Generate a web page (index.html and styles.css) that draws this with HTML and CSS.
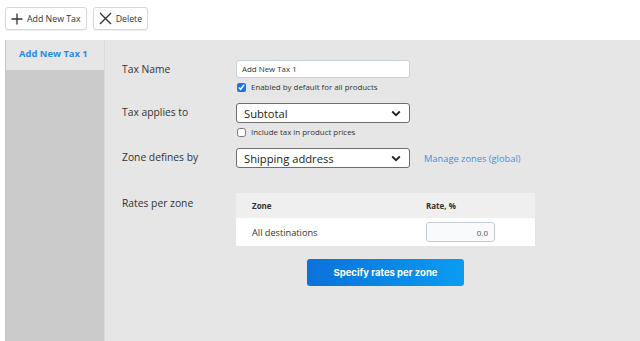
FILE: index.html
```html
<!DOCTYPE html>
<html lang="en">

<head>
    <meta charset="UTF-8">
    <title>Taxes</title>
    <link rel="stylesheet" href="styles.css">
</head>

<body>
    <div class="toolbar">
        <button class="tool-btn">
            <svg width="12" height="12" viewBox="0 0 12 12"><path d="M6 0.5V11.5M0.5 6H11.5" stroke="#333" stroke-width="1.3"/></svg>
            Add New Tax
        </button>
        <button class="tool-btn">
            <svg width="13" height="13" viewBox="0 0 13 13"><path d="M1 1L12 12M12 1L1 12" stroke="#333" stroke-width="1.4"/></svg>
            Delete
        </button>
    </div>

    <div class="panel">
        <div class="sidebar">
            <div class="tab">Add New Tax 1</div>
        </div>

        <div class="main">
            <div class="form-row row-name">
                <label class="row-label">Tax Name</label>
                <div class="field">
                    <input type="text" class="text-input" value="Add New Tax 1">
                    <label class="check"><input type="checkbox" checked> Enabled by default for all products</label>
                </div>
            </div>

            <div class="form-row row-applies">
                <label class="row-label">Tax applies to</label>
                <div class="field">
                    <div class="select">
                        <span>Subtotal</span>
                        <svg width="10" height="7" viewBox="0 0 10 7"><path d="M1.2 1.5L5 5.2L8.8 1.5" fill="none" stroke="#222" stroke-width="1.8"/></svg>
                    </div>
                    <label class="check"><input type="checkbox"> Include tax in product prices</label>
                </div>
            </div>

            <div class="form-row row-zone">
                <label class="row-label">Zone defines by</label>
                <div class="field inline">
                    <div class="select">
                        <span>Shipping address</span>
                        <svg width="10" height="7" viewBox="0 0 10 7"><path d="M1.2 1.5L5 5.2L8.8 1.5" fill="none" stroke="#222" stroke-width="1.8"/></svg>
                    </div>
                    <a href="#" class="link">Manage zones (global)</a>
                </div>
            </div>

            <div class="form-row row-rates">
                <label class="row-label">Rates per zone</label>
                <div class="field">
                    <div class="rates">
                        <div class="rates-head">
                            <span class="col-zone">Zone</span>
                            <span class="col-rate">Rate, %</span>
                        </div>
                        <div class="rates-row">
                            <span class="col-zone">All destinations</span>
                            <span class="col-rate"><input type="text" class="rate-input" value="0.0"></span>
                        </div>
                    </div>
                    <div class="rates-action">
                        <button class="primary-btn">Specify rates per zone</button>
                    </div>
                </div>
            </div>
        </div>
    </div>
</body>

</html>
```

FILE: styles.css
```css
body {
    margin: 0;
    padding: 0;
    background-color: #ffffff;
    font-family: "Open Sans", "Noto Sans", sans-serif;
    color: #333333;
    height: 341px;
    overflow: hidden;
}

.toolbar {
    display: flex;
    gap: 6px;
    padding: 7px 5px 0 5px;
    height: 33px;
    box-sizing: border-box;
}

.tool-btn {
    display: flex;
    align-items: center;
    gap: 4px;
    height: 23px;
    padding: 0 5px 0 5px;
    background-color: #ffffff;
    border: 1px solid #d5d8dc;
    border-radius: 3px;
    font-family: "Open Sans", sans-serif;
    font-size: 8.8px;
    color: #333333;
    box-shadow: 0 1px 1px rgba(0, 0, 0, 0.06);
}

.panel {
    display: flex;
    margin-top: 7px;
    margin-left: 5px;
    height: 301px;
    background-color: #e6e6e6;
    border-left: 1px solid #c4c4c4;
}

.sidebar {
    width: 98px;
    background-color: #cbcbcb;
    border-right: 1px solid #d9d9d9;
}

.tab {
    height: 30px;
    line-height: 28px;
    padding-left: 13px;
    background-color: #e6e6e6;
    color: #2a8ae6;
    font-weight: bold;
    font-size: 9.4px;
}

.main {
    flex: 1;
    padding: 20px 0 0 17px;
}

.form-row {
    display: flex;
}

.row-label {
    width: 114px;
    flex-shrink: 0;
    font-size: 10.3px;
    color: #333333;
    padding-top: 2px;
}

.row-applies {
    margin-top: 10px;
}

.row-zone {
    margin-top: 10px;
}

.row-rates {
    margin-top: 25px;
}

.row-rates .row-label {
    padding-top: 3px;
}

.field.inline {
    display: flex;
    align-items: center;
    gap: 14px;
}

.text-input {
    display: block;
    width: 174px;
    height: 18px;
    box-sizing: border-box;
    padding: 0 5px;
    border: 1px solid #c9d1d9;
    border-radius: 3px;
    font-family: "Open Sans", sans-serif;
    font-size: 7.9px;
    color: #333333;
}

.check {
    display: flex;
    align-items: center;
    gap: 5px;
    margin-top: 3px;
    height: 12px;
    font-size: 7.9px;
    color: #333333;
}

.check input {
    width: 9px;
    height: 9px;
    margin: 0 0 0 1px;
    accent-color: #1a73e8;
}

.select {
    display: flex;
    justify-content: space-between;
    align-items: center;
    width: 174px;
    height: 20px;
    box-sizing: border-box;
    padding: 0 8px 0 7px;
    background-color: #ffffff;
    border: 1px solid #6e6e6e;
    border-radius: 3px;
    font-size: 11.2px;
    color: #222222;
}

.link {
    font-size: 9.3px;
    color: #3f8fe0;
    text-decoration: none;
}

.rates {
    width: 299px;
}

.rates-head,
.rates-row {
    display: flex;
    align-items: center;
    padding-left: 16px;
}

.rates-head {
    height: 25px;
    background-color: #efefef;
    font-size: 8px;
    font-weight: bold;
    color: #333333;
}

.rates-row {
    height: 28px;
    background-color: #ffffff;
    font-size: 9.2px;
    color: #333333;
}

.col-zone {
    width: 174px;
}

.rate-input {
    width: 69px;
    height: 20px;
    box-sizing: border-box;
    padding: 0 6px;
    border: 1px solid #c3cad2;
    border-radius: 3px;
    background-color: #f9fafb;
    text-align: right;
    font-family: "Open Sans", sans-serif;
    font-size: 8px;
    color: #555555;
}

.rates-action {
    width: 299px;
    display: flex;
    justify-content: center;
    margin-top: 13px;
}

.primary-btn {
    width: 157px;
    height: 27px;
    border: none;
    border-radius: 3px;
    background: linear-gradient(to right, #0b72d9, #0a9cf3);
    color: #ffffff;
    font-family: "Inter", "Open Sans", sans-serif;
    font-weight: bold;
    font-size: 9.5px;
}
```
